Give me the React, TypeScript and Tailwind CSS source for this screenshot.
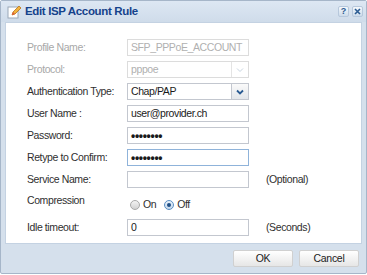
import React from "react";

const font = { fontFamily: "'Liberation Sans', Arial, sans-serif" };

function Field({
  label,
  value,
  disabled,
  focused,
  password,
  select,
  note,
}: {
  label: string;
  value?: string;
  disabled?: boolean;
  focused?: boolean;
  password?: boolean;
  select?: boolean;
  note?: string;
}) {
  const border = disabled
    ? "border-[#dcdcdc]"
    : focused
    ? "border-[#8fb3da]"
    : "border-[#c3c7cf]";
  return (
    <div className="flex items-center h-[17px] mb-[5px]">
      <div
        className={
          "w-[100px] shrink-0 text-[10.5px] tracking-[-0.4px] " +
          (disabled ? "text-[#a8a8a8]" : "text-[#2f2f2f]")
        }
      >
        {label}
      </div>
      <div
        className={
          "w-[122px] h-[17px] border bg-white flex items-center " + border
        }
      >
        <div
          className={
            "flex-1 px-[3px] leading-none truncate " +
            (disabled ? "text-[#b0b0b0]" : "text-[#1a1a1a]") +
            (password
              ? " text-[12px] font-bold tracking-[-0.3px]"
              : " text-[10.5px] tracking-[-0.4px]")
          }
        >
          {value}
        </div>
        {select && (
          <div
            className={
              "w-[17px] h-full border-l flex items-center justify-center " +
              (disabled
                ? "border-[#e4e4e4] bg-white"
                : "border-[#c3c7cf] bg-gradient-to-b from-[#fafafa] to-[#e3e6ea]")
            }
          >
            <svg width="8" height="6" viewBox="0 0 8 6">
              <path
                d="M1 1.5l3 3 3-3"
                fill="none"
                stroke={disabled ? "#c8d4e0" : "#2a5b92"}
                strokeWidth={disabled ? 1 : 1.8}
              />
            </svg>
          </div>
        )}
      </div>
      {note && (
        <div className="ml-[17px] text-[10.5px] tracking-[-0.4px] text-[#2f2f2f]">
          {note}
        </div>
      )}
    </div>
  );
}

function Radio({ checked }: { checked?: boolean }) {
  return (
    <span
      className={
        "w-[10px] h-[10px] rounded-full border flex items-center justify-center " +
        (checked
          ? "border-[#5a8fc4] bg-gradient-to-b from-[#e8f1fa] to-[#c4d8ec]"
          : "border-[#a9a9a9] bg-gradient-to-b from-[#f4f4f4] to-[#d2d2d2]")
      }
    >
      {checked && <span className="w-[4px] h-[4px] rounded-full bg-[#1f4f86]" />}
    </span>
  );
}

export default function App() {
  return (
    <div className="w-[367px] h-[275px] bg-white" style={font}>
      <div className="w-[367px] h-[274px] border border-[#a6b6c9] bg-[#d5e0ec] flex flex-col rounded-[2px]">
        {/* Title bar */}
        <div className="h-[21px] flex items-center pl-[6px] pr-[3px] bg-gradient-to-b from-[#dde7f3] to-[#cfdcea]">
          <svg width="14" height="14" viewBox="0 0 14 14" className="mr-[4px]">
            <rect x="1" y="2" width="10" height="11" fill="#fff" stroke="#9aa8b8" />
            <path d="M5 10l1-3 6-6 2 2-6 6z" fill="#f2b33d" stroke="#b8731c" strokeWidth="0.8" />
            <path d="M5 10l1-3 2 2z" fill="#e35a3c" />
          </svg>
          <span className="text-[11.5px] tracking-[-0.35px] font-bold text-[#15428b]">
            Edit ISP Account Rule
          </span>
          <div className="ml-auto flex gap-[3px]">
            <div className="w-[11px] h-[11px] rounded-[2px] border border-[#b7c8dc] bg-gradient-to-b from-[#f4f8fc] to-[#cddbea] flex items-center justify-center text-[9px] font-bold text-[#2a5b92] leading-none">
              ?
            </div>
            <div className="w-[11px] h-[11px] rounded-[2px] border border-[#b7c8dc] bg-gradient-to-b from-[#f4f8fc] to-[#cddbea] flex items-center justify-center">
              <svg width="7" height="7" viewBox="0 0 7 7">
                <path d="M1 1l5 5M6 1l-5 5" stroke="#2a5b92" strokeWidth="1.6" />
              </svg>
            </div>
          </div>
        </div>

        {/* Body */}
        <div className="mx-[4px] h-[222px] bg-white border border-[#c4d2e2] pt-[16px] pl-[21px]">
          <Field label="Profile Name:" value="SFP_PPPoE_ACCOUNT" disabled />
          <Field label="Protocol:" value="pppoe" disabled select />
          <Field label="Authentication Type:" value="Chap/PAP" select />
          <Field label="User Name :" value="user@provider.ch" />
          <Field label="Password:" value="••••••••" password />
          <Field label="Retype to Confirm:" value="••••••••" password focused />
          <Field label="Service Name:" value="" note="(Optional)" />
          <div className="flex h-[21px] mb-[5px] text-[10.5px] tracking-[-0.4px] text-[#2f2f2f]">
            <div className="w-[100px]">Compression</div>
            <div className="flex items-center gap-[3px] pl-[3px] pt-[4px] h-fit">
              <Radio />
              <span className="mr-[5px]">On</span>
              <Radio checked />
              <span>Off</span>
            </div>
          </div>
          <Field label="Idle timeout:" value="0" note="(Seconds)" />
        </div>

        {/* Footer */}
        <div className="flex-1 flex items-center justify-end gap-[6px] pr-[7px]">
          {["OK", "Cancel"].map((b) => (
            <div
              key={b}
              className="w-[60px] h-[17px] border border-[#d0d0d0] rounded-[2px] bg-gradient-to-b from-[#ffffff] to-[#e6e6e6] flex items-center justify-center text-[10.5px] tracking-[-0.3px] text-[#222]"
            >
              {b}
            </div>
          ))}
        </div>
      </div>
    </div>
  );
}
